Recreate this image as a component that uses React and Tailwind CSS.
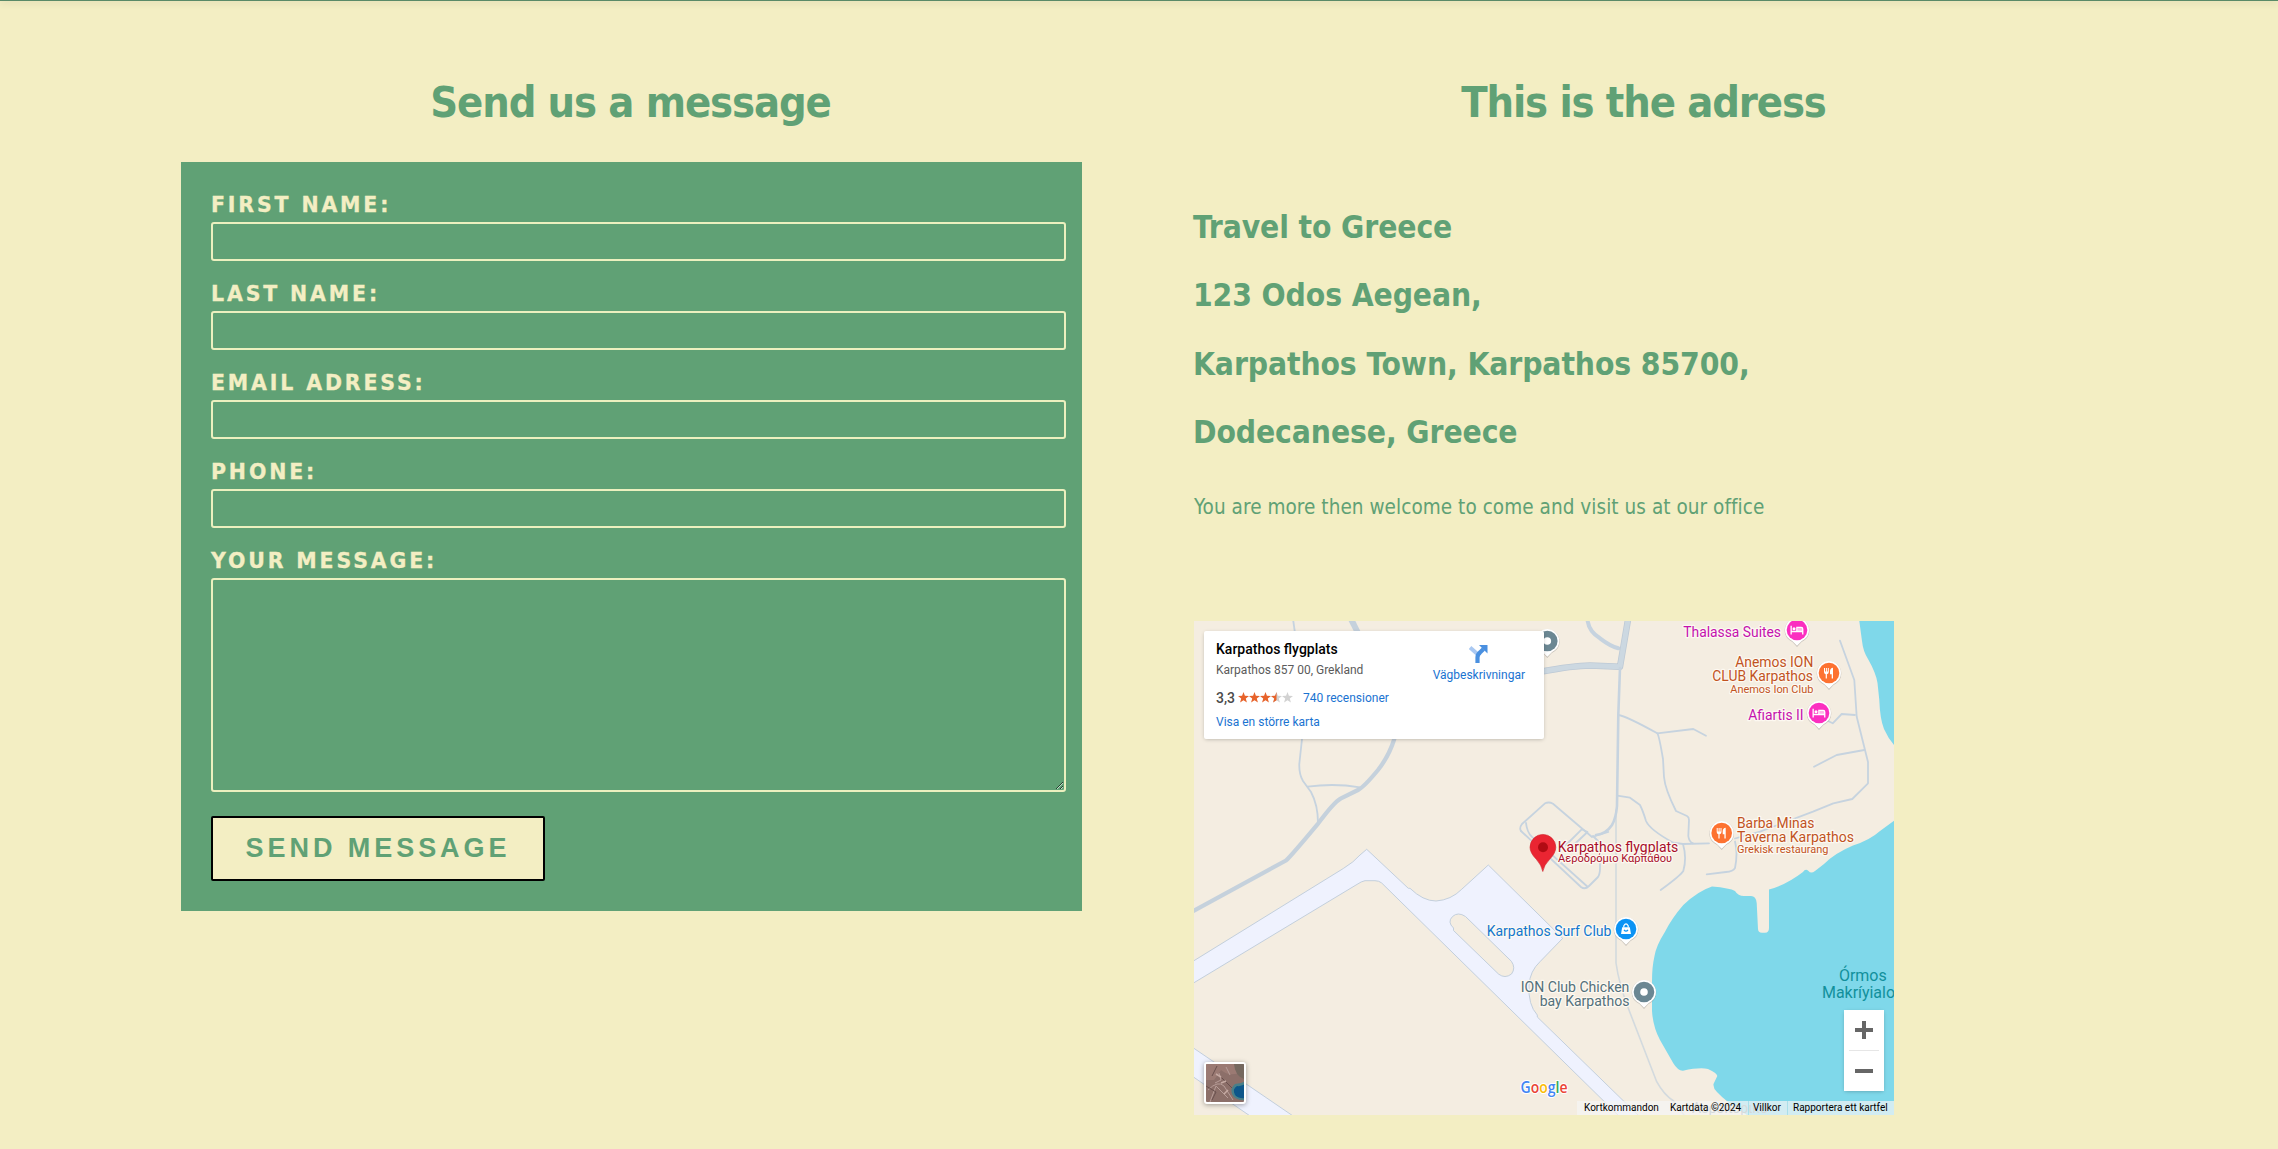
const fields = ['FIRST NAME:', 'LAST NAME:', 'EMAIL ADRESS:', 'PHONE:'];

const addressLines = [
  'Travel to Greece',
  '123 Odos Aegean,',
  'Karpathos Town, Karpathos 85700,',
  'Dodecanese, Greece',
];

function Heading({ children }) {
  return (
    <h2 className="pr-0.5 text-center text-[43px] leading-[50px] font-bold tracking-[-1.1px]">{children}</h2>
  );
}

function FieldLabel({ children }) {
  return (
    <span className="font-['DejaVu_Sans',Verdana,sans-serif] text-[20.500px] leading-[26px] font-bold tracking-[2.850px] [font-stretch:normal] [-webkit-text-stroke:0.3px_#f3eec3]">
      {children}
    </span>
  );
}

function ContactForm() {
  return (
    <form className="mt-[35px] flex h-[749px] flex-col bg-[#60a175] pt-[30px] pr-4 pl-[30px] text-[#f3eec3]">
      {fields.map((label) => (
        <label key={label} className="mb-5 flex h-[69px] flex-col justify-between">
          <FieldLabel>{label}</FieldLabel>
          <input className="h-[39px] w-full rounded-[3px] border-2 border-[#ecf0bf] bg-transparent px-2 outline-none" />
        </label>
      ))}
      <label className="flex h-[244px] flex-col justify-between">
        <FieldLabel>YOUR MESSAGE:</FieldLabel>
        <textarea className="h-[214px] w-full rounded-[3px] border-2 border-[#ecf0bf] bg-transparent outline-none" />
      </label>
      <button
        type="button"
        className="mt-6 h-[65px] w-[334px] rounded-[2px] border-2 border-black bg-[#f3eec3] font-['Liberation_Sans',Arial,sans-serif] text-[27px] font-bold tracking-[3.950px] whitespace-nowrap text-[#60a175]"
      >
        SEND MESSAGE
      </button>
    </form>
  );
}

function Pin({ x, y, color, children }) {
  return (
    <g transform={`translate(${x} ${y})`}>
      <path d="M0 17 L-4.5 12 A12.3 12.3 0 1 1 4.5 12 Z" fill="#8d8a84" opacity=".45" />
      <path d="M0 15.7 L-4.8 11 A12 12 0 1 1 4.8 11 Z" fill="#fff" />
      <circle r="10.3" fill={color} />
      {children}
    </g>
  );
}

function Bed() {
  return (
    <g fill="#fff">
      <path d="M-6.5 -4.2h1.3v5h4.4v-4h5q2.200 0 2.200 2.200v5.500h-1.300v-2.200h-10.300v2.200h-1.300z" />
      <circle cx="-3" cy="-1.3" r="1.5" />
      <path d="M.4 -2.100h3.600q1.100 0 1.100 1.100v1.800h-4.700z" fill="#fb2fc0" opacity=".35" />
    </g>
  );
}

function Cutlery() {
  return (
    <g fill="#fff">
      <path d="M-5 -5h1v3.6h.9v-3.6h1v3.6h.9v-3.6h1v4q0 1.8-1.9 2.2v4.3h-1.2v-4.3q-1.7-.4-1.7-2.2z" />
      <path d="M4 -5.3v10.8h-1.3v-4.3h-1.7v-3.3q.2-2.8 3-3.2z" />
    </g>
  );
}

function Label({ x, y, w, size = 14, fill, halo = '#fdf9f1', children }) {
  return (
    <text
      x={x}
      y={y}
      textLength={w}
      lengthAdjust="spacingAndGlyphs"
      fontSize={size}
      fill={fill}
      stroke={halo}
      strokeWidth="2.5"
      strokeLinejoin="round"
      paintOrder="stroke"
    >
      {children}
    </text>
  );
}

const roads = [
  'M99.300 0L101 12L108 118L105.300 143Q105 153 109 160L117 171Q124 184 124 202',
  'M113.700 165.700Q140 162 166 166.300',
  'M424.300 94Q432 95 463.300 112.300L499.300 108L512 114.700',
  'M463.300 112.300Q465 114 469 138L470 156Q471 168 482 190L493 195Q495 196 495 199L494.300 215Q495 221 499 222.300',
  'M423.300 174.700L436 176.700L446 184Q449 190 452 200Q456 209 479.300 221.700L489 223L515 222.300',
  'M489 223Q493 237 489.300 250Q486 255 466.700 269',
  'M541 220.500Q544 232 541 247Q539 250.500 532 251L512.700 253.300',
  'M541 217.500L566 210.700L619 190.700L639.300 182.300L658.300 178L674 162.300V141L662.700 95.700L660.300 59L646 19.700',
  'M670.300 129L642.700 134L620 145.700',
  'M661 94L647.700 93L638.700 102.300L632 99',
  'M327 210Q325 207 328 203L351 182.300Q355 180.500 359 182.700L398 216L414.300 211',
  'M327 210L387 266Q391 269 395 265L404 256Q406 253 406 247V222L399 215',
  'M332 202Q333 211 337.700 215.700L393.300 265.500',
  'M387.700 208.300L372 224M393.500 211L377.500 226M387.700 208.300L393.500 211',
];

function MapDrawing() {
  return (
    <svg
      viewBox="0 0 700 494"
      width="700"
      height="494"
      className="block font-[Roboto,sans-serif]"
      aria-label="Map"
    >
      <rect width="700" height="494" fill="#f4ede1" />
      <g fill="#7fd8ea">
        <path d="M665.300 0L668 20Q669 30 674 38Q682 52 683.500 62L685.300 79Q686 98 690 108Q694 117 700 124V0Z" />
        <path d="M700 199.700L686 210Q676 219 659 224.500Q641 232 630 243L621 250Q617 253 614.500 250Q611.500 247 609 251Q592 264 575 268.500V307Q575 311.700 571 311.700H568Q564 311.500 564 308L562.700 282Q562 275 557 275H550Q544 275 541 270Q536 267 518 265.500Q504 270 489.300 284Q478 297 471 310.700Q462 325 460.500 335Q458 346 458 360V390Q459 406 466 419L479.300 442.300Q484 450 489 449.700Q506 446 514 448Q523 452 523.300 455L519.500 463Q519 467 523 471Q532 481 553 494H700Z" />
      </g>
      <g fill="#eff2fe" stroke="#c3cfdc" strokeWidth="1">
        <path d="M-2 340.900L149.300 247.500Q160 241 166 234L172.700 228.300L214.300 267.300H216Q229 280 242 280Q257 279 267.700 268.300L294.300 244L368.700 317.300L346 340.700Q336 350 335 364Q334 384 343.300 394V396L446 496H426L187.700 262Q185 259.700 181 259.700H171Q168 260 162 264L-2 362.900Z" />
        <path d="M-2 426L102 497H59L-2 455Z" />
        <path d="M259.500 309.500V307Q253 301 258.500 295.500Q264 290.500 271.500 295.500L317.400 340.300Q322 347 317.500 353Q311 358 304.600 353.100Z" fill="#f4ede1" />
      </g>
      <g fill="none" stroke="#c6d3df" strokeLinecap="round" strokeLinejoin="round">
        {roads.map((d) => (
          <path key={d} d={d} strokeWidth="1.8" />
        ))}
        <path d="M422 189V342Q425 363 434.300 387.300L462.700 460.700Q470 474 479.300 479.700L490 494" stroke="#d3dade" strokeWidth="1.6" />
        <path d="M0 289.700L92 239.500Q97 235 124.300 202.300Q140 181 147 177.300L164 169Q170 166 184 149Q195 135 200.300 118L210 80" stroke="#c5d1dc" strokeWidth="4.200" />
        <path d="M155 -6L166 16" stroke="#c5d1dc" strokeWidth="6" />
        <path d="M393.300 -3Q394 10 406 17.300Q416 25 424.300 27.300" strokeWidth="4" />
        <path d="M345 51Q380 44.500 396 44.500L426 45.700L434.300 -3" stroke="#bdc9d5" strokeWidth="6.500" strokeLinecap="butt" />
        <path d="M345 51Q380 44.500 396 44.500L426 45.700L434.300 -3" stroke="#ccd8e1" strokeWidth="5" strokeLinecap="butt" />
        <path d="M426 47L424.300 94L423 185Q422 197 418 204Q412 213 402 214" strokeWidth="2.600" />
      </g>

      <Pin x={353.3} y={20} color="#6b8793"><circle r="3.800" fill="#fff" /></Pin>
      <Pin x={603} y={9} color="#fb2fc0"><Bed /></Pin>
      <Pin x={635} y={52} color="#fd7231"><Cutlery /></Pin>
      <Pin x={625} y={92} color="#fb2fc0"><Bed /></Pin>
      <Pin x={527.7} y={212} color="#fd7231"><Cutlery /></Pin>
      <Pin x={432} y={308} color="#0c93f4">
        <path d="M-3.800 -1.800H3.800L5 5H-5Z" fill="#fff" />
        <path d="M-2.200 -1.500V-3.200Q0 -7 2.200 -3.200V-1.500" fill="none" stroke="#fff" strokeWidth="1.200" />
        <path d="M-2 .800Q0 3.600 2 .800" fill="none" stroke="#0c93f4" strokeWidth="1.200" />
      </Pin>
      <Pin x={450} y={371} color="#6b8793"><circle r="3.800" fill="#fff" /></Pin>
      <path d="M348.800 250.500Q347.500 244 342.500 238.500Q336 232 336 226.300A12.900 12.900 0 0 1 361.800 226.300Q361.800 232 355.500 238.500Q350 244 348.800 250.500Z" fill="#ea2532" stroke="#cf2029" strokeWidth=".6" />
      <circle cx="349" cy="226.300" r="5" fill="#b10b13" />

      <Label x={489.3} y={16} w={97.7} fill="#c412ae">Thalassa Suites</Label>
      <Label x={541.3} y={46.3} w={78} fill="#c1531f">Anemos ION</Label>
      <Label x={518.3} y={60.3} w={100.7} fill="#c1531f">CLUB Karpathos</Label>
      <Label x={536.3} y={71.7} w={83} size={11.5} fill="#c1531f">Anemos Ion Club</Label>
      <Label x={554.3} y={99.3} w={55.3} fill="#c412ae">Afiartis II</Label>
      <Label x={543} y={207.3} w={77.3} fill="#c1531f">Barba Minas</Label>
      <Label x={543} y={221.3} w={117} fill="#c1531f">Taverna Karpathos</Label>
      <Label x={543} y={231.7} w={91.5} size={11.5} fill="#c1531f">Grekisk restaurang</Label>
      <Label x={363.8} y={231.3} w={120.5} fill="#a80d2a">Karpathos flygplats</Label>
      <Label x={364} y={241.3} w={114} size={11.5} fill="#a80d2a">Αεροδρόμιο Καρπάθου</Label>
      <Label x={292.7} y={315} w={124.7} fill="#1277cf">Karpathos Surf Club</Label>
      <Label x={326.7} y={371.3} w={108.7} fill="#53707b">ION Club Chicken</Label>
      <Label x={345.7} y={385.3} w={89.7} fill="#53707b">bay Karpathos</Label>
      <g fill="#12909c" fontSize="16">
        <text x="645" y="359.700" textLength="47.700">Órmos</text>
        <text x="628" y="376.700" textLength="73">Makríyialo</text>
      </g>
      <text x="326.500" y="472" textLength="47" lengthAdjust="spacingAndGlyphs" fontSize="15.500" stroke="#fff" strokeWidth="2" paintOrder="stroke" className="font-['Open_Sans',Roboto,sans-serif] font-semibold">
        <tspan fill="#4285f4">G</tspan>
        <tspan fill="#ea4335">o</tspan>
        <tspan fill="#fbbc05">o</tspan>
        <tspan fill="#4285f4">g</tspan>
        <tspan fill="#34a853">l</tspan>
        <tspan fill="#ea4335">e</tspan>
      </text>
      <text x="498" y="491.500" textLength="76" fontSize="14" fill="#8b9a9c">Αεροπορικό</text>
    </svg>
  );
}

const star = 'M5.500 0L6.900 3.800L11 4L7.800 6.500L8.900 10.400L5.500 8.200L2.100 10.400L3.200 6.500L0 4L4.100 3.800Z';

function Stars() {
  return (
    <svg width="55" height="11" viewBox="0 0 55 11">
      {[0, 1, 2, 3, 4].map((i) => (
        <path key={i} d={star} transform={`translate(${i * 11} 0)`} fill={i < 3 ? '#e7632b' : '#d2d2d2'} />
      ))}
      <path d="M38.500 0V8.200L35.100 10.400L36.200 6.500L33 4L37.100 3.800Z" fill="#e7632b" />
    </svg>
  );
}

function InfoCard() {
  return (
    <div className="absolute top-2.5 left-2.5 flex h-[108px] w-[340px] justify-between rounded-[2px] bg-white pr-[19px] pl-3 whitespace-nowrap shadow-[0_1px_4px_-1px_rgba(0,0,0,0.3)]">
      <div className="flex flex-col">
        <p className="mt-[9px] text-[14px] leading-[18px] font-medium text-black">Karpathos flygplats</p>
        <p className="mt-1 text-[12px] leading-4 text-[#5b5b5b]">Karpathos 857 00, Grekland</p>
        <div className="mt-3 flex items-center gap-[3px] text-[12px] leading-4 text-[#1a73d1]">
          <span className="text-[14px] font-medium text-[#4b4b4b]">3,3</span>
          <Stars />
          <span className="ml-[7px]">740 recensioner</span>
        </div>
        <p className="mt-2 text-[12px] leading-4 text-[#1a73d1]">Visa en större karta</p>
      </div>
      <div className="flex flex-col items-center pt-3.5 text-[12px] leading-4 text-[#1a73d1]">
        <svg width="19" height="18" viewBox="0 0 19 18">
          <path d="M1 2.500L9 9.500" stroke="#a9c8f2" strokeWidth="4" />
          <path d="M8.500 18V12.500Q8.500 9.500 11 7.500L14.500 4" fill="none" stroke="#4a90e0" strokeWidth="4.200" />
          <path d="M10 0H18.500V8.500Z" fill="#4a90e0" />
        </svg>
        <span className="mt-1">Vägbeskrivningar</span>
      </div>
    </div>
  );
}

function Satellite() {
  return (
    <button
      type="button"
      aria-label="Satellite"
      className="absolute bottom-[11px] left-2.5 size-[42px] overflow-hidden rounded-[3px] border-2 border-white bg-white shadow-[0_1px_5px_rgba(0,0,0,0.35)]"
    >
      <svg width="38" height="38" viewBox="0 0 38 38">
        <defs>
          <filter id="soft"><feGaussianBlur stdDeviation="0.700" /></filter>
        </defs>
        <rect width="38" height="38" fill="#8c6f69" />
        <g filter="url(#soft)">
          <path d="M0 0H38V7Q24 14 15 6L8 16H0Z" fill="#a17f78" opacity=".7" />
          <path d="M28 0H38V15Q29 12 28 0Z" fill="#75685e" />
          <path d="M2 26Q12 16 18 22L27 36M4 38L10 22L22 34M13 9L15 16L9 19M20 3L24 11" stroke="#b79d98" fill="none" />
          <path d="M0 22L10 28L6 36M16 14L26 24M11 2L6 12" stroke="#69504d" fill="none" />
          <path d="M10 10L15 13M15 19L20 17M22 26L18 30" stroke="#c6aaa3" strokeWidth="1.500" />
          <path d="M40 17Q34 20 29 20Q24 24 26 30Q29 37 40 36Z" fill="#497f89" />
          <path d="M40 19Q36 23 31 22Q26 25 29 31Q33 35 40 34Z" fill="#07578a" />
        </g>
      </svg>
    </button>
  );
}

function MapEmbed() {
  return (
    <div className="relative mt-[102px] h-[494px] w-[700px] overflow-hidden font-[Roboto,sans-serif] tracking-normal [font-stretch:normal]">
      <MapDrawing />
      <InfoCard />
      <Satellite />
      <div className="absolute right-2.5 bottom-6 flex h-[81px] w-10 flex-col items-center justify-center bg-white shadow-[0_1px_4px_-1px_rgba(0,0,0,0.3)]">
        <svg width="30" height="81" viewBox="0 0 30 81" stroke="#666" strokeWidth="4">
          <path d="M6 20H24M15 11V29M6 61H24" />
          <path d="M0 40.500H30" stroke="#e6e6e6" strokeWidth="1" />
        </svg>
      </div>
      <div className="absolute right-0 bottom-0 flex h-3.5 bg-[#f5f5f5]/70 text-[10px] leading-[13px] whitespace-nowrap text-black">
        <span className="w-[87px] pl-[7px]">Kortkommandon</span>
        <span className="w-[84px] pl-1.5">Kartdata ©2024</span>
        <span className="w-[39px] border-l border-[#a9dfe9] pl-1">Villkor</span>
        <span className="w-[107px] border-l border-[#a9dfe9] pl-[5px]">Rapportera ett kartfel</span>
      </div>
    </div>
  );
}

export default function App() {
  return (
    <div className="h-[1149px] w-[2278px] overflow-hidden bg-[#f3eec3] font-['DejaVu_Sans_Condensed','DejaVu_Sans',Tahoma,sans-serif] [font-stretch:condensed] text-[#60a175]">
      <header className="h-px bg-[#5a8a68] shadow-[0_1px_7px_rgba(0,0,0,0.3)]" />
      <main className="grid grid-cols-[901px_901px] gap-x-28 pt-[76px] pl-[181px]">
        <section>
          <Heading>Send us a message</Heading>
          <ContactForm />
        </section>
        <section>
          <Heading>This is the adress</Heading>
          <address className="-ml-px mt-[66px] text-[31.500px] leading-[68.400px] font-bold tracking-[-0.100px] not-italic">
            {addressLines.map((line) => (
              <p key={line}>{line}</p>
            ))}
          </address>
          <p className="mt-7 text-[20.500px] leading-6 tracking-[0.060px]">
            You are more then welcome to come and visit us at our office
          </p>
          <MapEmbed />
        </section>
      </main>
    </div>
  );
}
